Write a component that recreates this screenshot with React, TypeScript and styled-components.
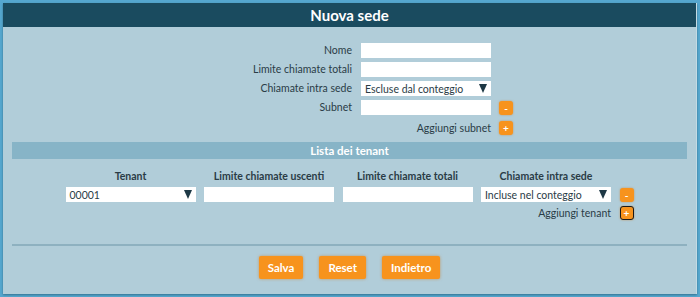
import styled, { createGlobalStyle } from 'styled-components';

const GlobalStyle = createGlobalStyle`
  html, body {
    margin: 0;
    padding: 0;
    background: #55a7cf;
    font-family: Lato, 'Open Sans', 'Liberation Sans', sans-serif;
  }
  * {
    box-sizing: border-box;
  }
`;

const TENANT_COLUMNS = [
  'Tenant',
  'Limite chiamate uscenti',
  'Limite chiamate totali',
  'Chiamate intra sede',
];

const App = () => {
  return (
    <>
      <GlobalStyle />
      <Page>
        <Card>
          <Header>Nuova sede</Header>
          <Body>
            <FormGrid>
              <Label>Nome</Label>
              <TextInput />
              <span />

              <Label>Limite chiamate totali</Label>
              <TextInput />
              <span />

              <Label>Chiamate intra sede</Label>
              <Select>
                <span>Escluse dal conteggio</span>
                <Arrow />
              </Select>
              <span />

              <Label>Subnet</Label>
              <TextInput />
              <SmallButton>-</SmallButton>

              <span />
              <AddLabel>Aggiungi subnet</AddLabel>
              <SmallButton>+</SmallButton>
            </FormGrid>

            <SectionBar>Lista dei tenant</SectionBar>

            <TenantGrid>
              {TENANT_COLUMNS.map((c) => (
                <ColumnTitle key={c}>{c}</ColumnTitle>
              ))}
              <span />

              <Select>
                <span>00001</span>
                <Arrow />
              </Select>
              <TextInput />
              <TextInput />
              <Select>
                <span>Incluse nel conteggio</span>
                <Arrow />
              </Select>
              <SmallButton>-</SmallButton>

              <AddTenantLabel>Aggiungi tenant</AddTenantLabel>
              <SmallButton $focused>+</SmallButton>
            </TenantGrid>

            <Divider />

            <Actions>
              <ActionButton>Salva</ActionButton>
              <ActionButton>Reset</ActionButton>
              <ActionButton>Indietro</ActionButton>
            </Actions>
          </Body>
        </Card>
      </Page>
    </>
  );
};

export default App;

/* ================= STYLES ================= */

const Page = styled.div`
  width: 700px;
  height: 297px;
  padding: 3px 3px 0 3px;
`;

const Card = styled.div`
  height: 291px;
  background: #b1cdd9;
  border-right: 1px solid #c4dbe4;
  box-shadow: 0 1px 2px rgba(20, 60, 80, 0.5);
  display: flex;
  flex-direction: column;
`;

const Header = styled.div`
  height: 24px;
  background: #1a4b5f;
  color: #fff;
  font-weight: 700;
  font-size: 15px;
  display: flex;
  align-items: center;
  justify-content: center;
`;

const Body = styled.div`
  padding: 16px 9px 0 9px;
  display: flex;
  flex-direction: column;
`;

const FormGrid = styled.div`
  display: grid;
  grid-template-columns: 167px 130px 14px;
  column-gap: 8px;
  row-gap: 4px;
  justify-content: center;
  align-items: center;
`;

const Label = styled.div`
  text-align: right;
  font-size: 10.5px;
  color: #2a3c46;
  padding-right: 1px;
  line-height: 15px;
`;

const TextInput = styled.div`
  height: 15px;
  background: #fff;
`;

const Select = styled.div`
  height: 15px;
  background: #fff;
  display: flex;
  align-items: center;
  justify-content: space-between;
  padding: 0 4px 0 4px;
  font-size: 10.5px;
  color: #2a3c46;
`;

const Arrow = styled.span`
  width: 0;
  height: 0;
  border-left: 4.5px solid transparent;
  border-right: 4.5px solid transparent;
  border-top: 9px solid #1d3845;
`;

const SmallButton = styled.div<{ $focused?: boolean }>`
  width: 14px;
  height: 14px;
  border-radius: 3px;
  background: #f7931d;
  color: #fff;
  font-size: 10px;
  font-weight: 700;
  display: flex;
  align-items: center;
  justify-content: center;
  line-height: 1;
  box-shadow: 0 0 2px rgba(210, 110, 0, 0.6);
  border: ${(p) => (p.$focused ? '1.5px solid #1a1a1a' : 'none')};
`;

const AddLabel = styled.div`
  text-align: right;
  font-size: 10.5px;
  color: #2a3c46;
  line-height: 15px;
  margin-top: 2px;
`;

const SectionBar = styled.div`
  margin-top: 6px;
  height: 17px;
  background: #87b4c7;
  color: #fff;
  font-weight: 700;
  font-size: 11.5px;
  display: flex;
  align-items: center;
  justify-content: center;
`;

const TenantGrid = styled.div`
  margin-top: 10px;
  display: grid;
  grid-template-columns: repeat(4, 130px) 14px;
  column-gap: 8.5px;
  row-gap: 4px;
  justify-content: center;
  align-items: center;
`;

const ColumnTitle = styled.div`
  text-align: center;
  font-size: 10.5px;
  font-weight: 700;
  color: #2a3c46;
  line-height: 14px;
`;

const AddTenantLabel = styled.div`
  grid-column: 1 / span 4;
  text-align: right;
  font-size: 10.5px;
  color: #2a3c46;
  line-height: 14px;
`;

const Divider = styled.div`
  margin-top: 24px;
  height: 2px;
  background: #8eb1c0;
`;

const Actions = styled.div`
  margin-top: 10px;
  display: flex;
  justify-content: center;
  gap: 16px;
`;

const ActionButton = styled.div`
  height: 23px;
  padding: 0 9px;
  background: #f7931d;
  color: #fff;
  font-size: 11.5px;
  font-weight: 700;
  display: flex;
  align-items: center;
  border-radius: 2px;
  box-shadow: 0 0 3px rgba(210, 110, 0, 0.55);
`;
